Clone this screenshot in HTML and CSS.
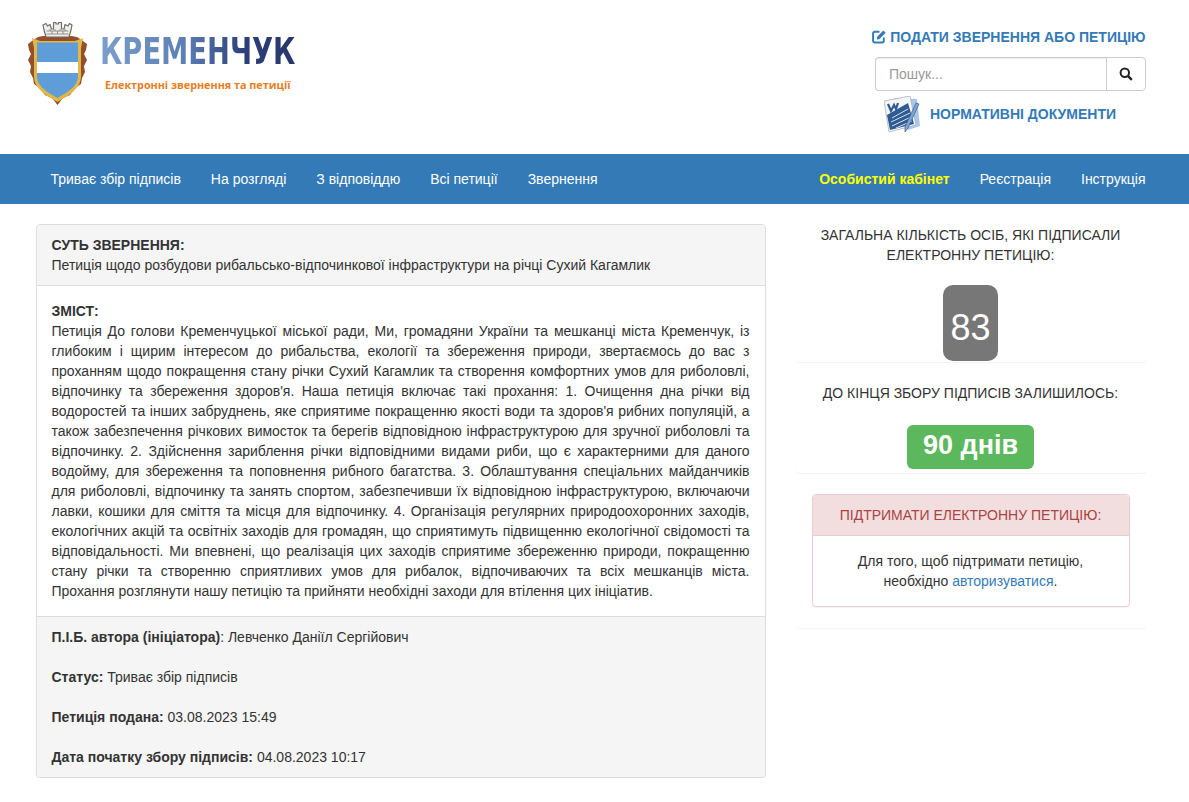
FILE: index.html
```html
<!DOCTYPE html>
<html lang="uk">
<head>
    <meta charset="UTF-8">
    <meta name="viewport" content="width=device-width, initial-scale=1.0">
    <title>Електронні звернення та петиції</title>
    <link rel="stylesheet" href="styles.css">
</head>
<body>
    <header class="site-header">
        <a class="logo" href="#">
            <svg class="logo-arms" viewBox="27 20 62 86" width="62" height="86">
                <!-- картуш -->
                <path d="M38 37 C46 35 68 35 77 37 L83 41 L87 44 L86 50 L84 54 L87 60 L84 66 L85 72 L82 78 L81 84 L75 88 L70 95 L63 98 L57.500 105 L52 98 L45 95 L40 88 L34 84 L33 78 L30 72 L31 66 L28 60 L31 54 L29 50 L28 44 L32 41 Z" fill="#93502a"/>
                <path d="M32 38 L40 41 H75 L83 38 L81 48 V76 C81 89 68 96 57.500 102 C47 96 34 89 34 76 V48 Z" fill="#e0b748"/>
                <!-- щит -->
                <path d="M37 42.500 H78 V76 C78 87 66 93 57.500 98 C49 93 37 87 37 76 Z" fill="#5f9dd8"/>
                <rect x="37" y="62" width="41" height="11" fill="#fff"/>
                <!-- корона -->
                <path d="M46 37 L44 30 L43 25 L46 23.5 L47.5 26 L50 24.5 L51.5 29 L53.5 29 L53.5 22.5 L56 22.5 L56 24 L58.500 24 L58.500 22.5 L61.500 22.5 L61.500 29 L64 29 L65 24.500 L68 26 L69.500 23.500 L72 25 L71 30 L69 37 Z" fill="#eeeeec" stroke="#6f6d69" stroke-width="1.200" stroke-linejoin="round"/>
                <path d="M46.500 31 H68.500 M46.500 34 H68.500 M50 29 V31 M55 29 V31 M60 29 V31 M65 29 V31 M52 31 V34 M57.500 31 V34 M63 31 V34" stroke="#7d7a75" stroke-width="0.800" fill="none"/>
            </svg>
            <div class="logo-words">
                <div class="logo-title">КРЕМЕНЧУК</div>
                <div class="logo-sub">Електронні звернення та петиції</div>
            </div>
        </a>
        <div class="header-right">
            <a class="head-link" href="#">
                <svg class="edit-icon" viewBox="0 0 14 14" width="15" height="15">
                    <path d="M11 8 V11 A1.6 1.6 0 0 1 9.4 12.6 H2.6 A1.6 1.6 0 0 1 1 11 V4.2 A1.6 1.6 0 0 1 2.6 2.6 H7" fill="none" stroke="#337ab7" stroke-width="1.8"/>
                    <path d="M4.6 7.4 L10.6 1.4 L12.8 3.6 L6.8 9.6 L4.6 9.8 Z" fill="#337ab7"/>
                </svg>
                ПОДАТИ ЗВЕРНЕННЯ АБО ПЕТИЦІЮ
            </a>
            <form class="search">
                <input class="search-input" type="text" placeholder="Пошук...">
                <button class="search-btn" type="button">
                    <svg viewBox="0 0 14 14" width="14" height="14">
                        <circle cx="5.8" cy="5.8" r="4.2" fill="none" stroke="#222" stroke-width="2"/>
                        <path d="M8.9 8.9 L12.8 12.8" stroke="#222" stroke-width="2.4"/>
                    </svg>
                </button>
            </form>
            <a class="docs-link" href="#">
                <svg class="docs-icon" viewBox="0 0 37 37" width="37" height="37">
                    <path d="M10 2 L33 3 L36 30 L24 34 Z" fill="#a9c8ea"/>
                    <path d="M0 5 L26 0 L32 29 L5 36 Z" fill="#f4f5f7" stroke="#aab1ba" stroke-width="0.8"/>
                    <path d="M3 19 L24 7 L30 28 L6 34 Z" fill="#2f5b93"/>
                    <path d="M8 22 L24 13 M7 26 L26 17 M8 30 L27 21 M12 32 L28 25" stroke="#d5e3f3" stroke-width="1"/>
                    <path d="M4 8 L7 15 L10 9 L12 13 L14 7" fill="none" stroke="#2f5b93" stroke-width="2.2"/>
                    <path d="M35 8 L24 32 L21 36 L21 31 L32 7 Z" fill="#7fa6d3" stroke="#3c5f8c" stroke-width="0.7"/>
                </svg>
                <span>НОРМАТИВНІ ДОКУМЕНТИ</span>
            </a>
        </div>
    </header>

    <nav class="navbar">
        <ul class="nav-list">
            <li><a href="#">Триває збір підписів</a></li>
            <li><a href="#">На розгляді</a></li>
            <li><a href="#">З відповіддю</a></li>
            <li><a href="#">Всі петиції</a></li>
            <li><a href="#">Звернення</a></li>
        </ul>
        <ul class="nav-list">
            <li><a class="nav-cabinet" href="#">Особистий кабінет</a></li>
            <li><a href="#">Реєстрація</a></li>
            <li><a href="#">Інструкція</a></li>
        </ul>
    </nav>

    <main class="content">
        <section class="petition">
            <div class="petition-head">
                <b>СУТЬ ЗВЕРНЕННЯ:</b><br>
                Петиція щодо розбудови рибальсько-відпочинкової інфраструктури на річці Сухий Кагамлик
            </div>
            <div class="petition-body">
                <b>ЗМІСТ:</b><br>
                Петиція До голови Кременчуцької міської ради, Ми, громадяни України та мешканці міста Кременчук, із глибоким і щирим інтересом до рибальства, екології та збереження природи, звертаємось до вас з проханням щодо покращення стану річки Сухий Кагамлик та створення комфортних умов для риболовлі, відпочинку та збереження здоров'я. Наша петиція включає такі прохання: 1. Очищення дна річки від водоростей та інших забруднень, яке сприятиме покращенню якості води та здоров'я рибних популяцій, а також забезпечення річкових вимосток та берегів відповідною інфраструктурою для зручної риболовлі та відпочинку. 2. Здійснення зариблення річки відповідними видами риби, що є характерними для даного водойму, для збереження та поповнення рибного багатства. 3. Облаштування спеціальних майданчиків для риболовлі, відпочинку та занять спортом, забезпечивши їх відповідною інфраструктурою, включаючи лавки, кошики для сміття та місця для відпочинку. 4. Організація регулярних природоохоронних заходів, екологічних акцій та освітніх заходів для громадян, що сприятимуть підвищенню екологічної свідомості та відповідальності. Ми впевнені, що реалізація цих заходів сприятиме збереженню природи, покращенню стану річки та створенню сприятливих умов для рибалок, відпочиваючих та всіх мешканців міста. Прохання розглянути нашу петицію та прийняти необхідні заходи для втілення цих ініціатив.
            </div>
            <div class="petition-foot">
                <p><b>П.І.Б. автора (ініціатора)</b>: Левченко Даніїл Сергійович</p>
                <p><b>Статус:</b> Триває збір підписів</p>
                <p><b>Петиція подана:</b> 03.08.2023 15:49</p>
                <p><b>Дата початку збору підписів:</b> 04.08.2023 10:17</p>
            </div>
        </section>

        <aside class="sidebar">
            <div class="side-box side-count">
                <div class="side-title">ЗАГАЛЬНА КІЛЬКІСТЬ ОСІБ, ЯКІ ПІДПИСАЛИ ЕЛЕКТРОННУ ПЕТИЦІЮ:</div>
                <span class="count-badge">83</span>
            </div>
            <div class="side-box side-days">
                <div class="side-title">ДО КІНЦЯ ЗБОРУ ПІДПИСІВ ЗАЛИШИЛОСЬ:</div>
                <span class="days-badge">90 днів</span>
            </div>
            <div class="side-box side-support">
                <div class="support-panel">
                    <div class="support-head">ПІДТРИМАТИ ЕЛЕКТРОННУ ПЕТИЦІЮ:</div>
                    <div class="support-body">
                        Для того, щоб підтримати петицію,<br>
                        необхідно <a href="#">авторизуватися</a>.
                    </div>
                </div>
            </div>
        </aside>
    </main>
</body>
</html>
```

FILE: styles.css
```css
* {
    box-sizing: border-box;
}

body {
    margin: 0;
    font-family: "Liberation Sans", Arial, sans-serif;
    font-size: 14px;
    line-height: 20px;
    color: #333;
    background: #fff;
}

a {
    color: #337ab7;
    text-decoration: none;
}

/* шапка */
.site-header {
    height: 154px;
    padding: 20px 43px 0 27px;
    display: flex;
    justify-content: space-between;
}

.logo {
    display: flex;
    align-items: flex-start;
    gap: 11px;
    height: 88px;
}

.logo-arms {
    flex: none;
    filter: blur(0.35px);
}

.logo-words {
    width: 200px;
}

.logo-title {
    margin-top: 10px;
    height: 42px;
    width: 290px;
    font-family: "DejaVu Sans", sans-serif;
    font-size: 38px;
    line-height: 42px;
    font-weight: 700;
    white-space: nowrap;
    transform: scaleX(0.72);
    transform-origin: left center;
    background: linear-gradient(90deg, #7c9ecb 0%, #5c80b6 40%, #2c3f77 70%, #26356a 100%);
    -webkit-background-clip: text;
    background-clip: text;
    color: transparent;
    filter: blur(0.4px);
}

.logo-sub {
    margin: 5px 0 0 5px;
    font-family: "Open Sans", sans-serif;
    font-size: 10.8px;
    line-height: 16px;
    font-weight: 700;
    color: #e67e22;
    white-space: nowrap;
}

.header-right {
    width: 271px;
    margin-top: 2px;
    display: flex;
    flex-direction: column;
    align-items: flex-end;
}

.head-link {
    margin: 5px 0.5px 0 0;
    font-size: 14px;
    font-weight: 700;
    white-space: nowrap;
}

.edit-icon {
    vertical-align: -2px;
    margin-right: -1px;
}

.search {
    display: flex;
    width: 271px;
    height: 34px;
    margin-top: 10px;
}

.search-input {
    flex: 1;
    min-width: 0;
    height: 34px;
    padding: 6px 13px;
    font-family: inherit;
    font-size: 14px;
    color: #555;
    border: 1px solid #ccc;
    border-right: 0;
    border-radius: 4px 0 0 4px;
    box-shadow: inset 0 1px 1px rgba(0, 0, 0, 0.075);
}

.search-input::placeholder {
    color: #999;
}

.search-btn {
    width: 40px;
    height: 34px;
    padding: 0;
    background: #fff;
    border: 1px solid #ccc;
    border-radius: 0 4px 4px 0;
}

.search-btn svg {
    display: block;
    margin: 0 auto;
}

.docs-link {
    align-self: flex-start;
    display: flex;
    align-items: center;
    gap: 9px;
    margin: 5px 0 0 9px;
    font-weight: 700;
    white-space: nowrap;
}

.docs-link span {
    position: relative;
    top: -1px;
}

/* меню */
.navbar {
    height: 50px;
    padding: 0 28.5px 0 35.5px;
    background: #337ab7;
    display: flex;
    justify-content: space-between;
}

.nav-list {
    display: flex;
    margin: 0;
    padding: 0;
    list-style: none;
}

.nav-list a {
    display: block;
    padding: 15px;
    color: #fff;
}

.nav-list .nav-cabinet {
    color: #ff0;
    font-weight: 700;
}

/* контент */
.content {
    display: flex;
    align-items: flex-start;
    gap: 30px;
    padding: 20px 43px 0 35.5px;
}

.petition {
    width: 730px;
    flex: none;
    background: #fff;
    border: 1px solid #ddd;
    border-radius: 4px;
    box-shadow: 0 1px 1px rgba(0, 0, 0, 0.05);
}

.petition-head {
    padding: 10px 15px;
    background: #f5f5f5;
    border-bottom: 1px solid #ddd;
    border-radius: 3px 3px 0 0;
}

.petition-body {
    padding: 15px;
    text-align: justify;
}

.petition-foot {
    padding: 10px 15px;
    background: #f5f5f5;
    border-top: 1px solid #ddd;
    border-radius: 0 0 3px 3px;
}

.petition-foot p {
    margin: 0 0 20px;
}

.petition-foot p:last-child {
    margin-bottom: 0;
}

/* права колонка */
.sidebar {
    width: 350px;
    flex: none;
}

.side-box {
    text-align: center;
    border-radius: 4px;
    box-shadow: 0 1px 1px rgba(0, 0, 0, 0.05);
}

.side-title {
    padding: 0 15px;
}

.side-count {
    height: 138px;
    margin-bottom: 11px;
    padding-top: 1px;
}

.count-badge {
    display: block;
    width: 55px;
    height: 76px;
    margin: 20px auto 0;
    padding-top: 22px;
    background: #777;
    border-radius: 10px;
    color: #fff;
    font-size: 36px;
    line-height: 42px;
}

.side-days {
    height: 100px;
    margin-bottom: 21px;
    padding-top: 10px;
}

.days-badge {
    display: block;
    width: 127px;
    height: 44px;
    margin: 22px auto 0;
    background: #5cb85c;
    border-radius: 6px;
    color: #fff;
    font-size: 27px;
    line-height: 41px;
    font-weight: 700;
}

.side-support {
    padding: 0 16px 21px;
}

.support-panel {
    border: 1px solid #ebccd1;
    border-radius: 4px;
    box-shadow: 0 1px 1px rgba(0, 0, 0, 0.05);
}

.support-head {
    padding: 10px 15px;
    background: #f2dede;
    border-bottom: 1px solid #ebccd1;
    border-radius: 3px 3px 0 0;
    color: #a94442;
}

.support-body {
    padding: 15px;
}
```
